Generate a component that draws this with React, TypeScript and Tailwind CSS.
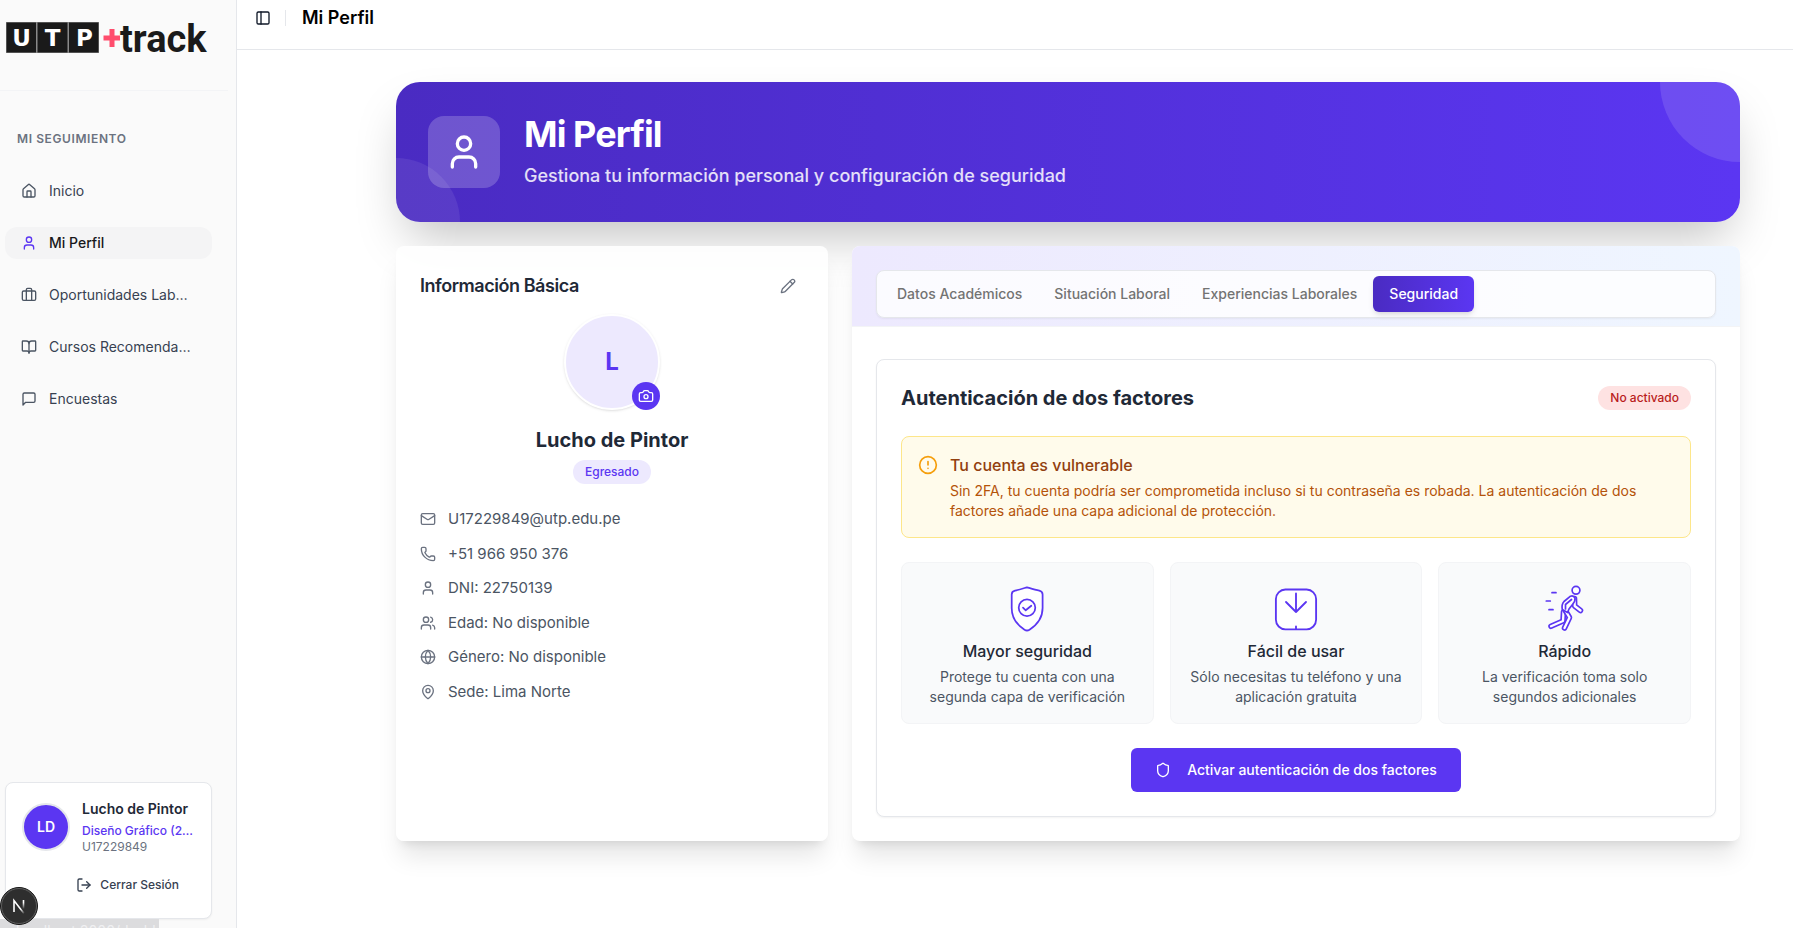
import type { ReactNode } from "react";
import {
  BookOpen,
  Briefcase,
  Camera,
  CircleAlert,
  Globe,
  House,
  LogOut,
  Mail,
  MapPin,
  PanelLeft,
  Pencil,
  Phone,
  Shield,
  User,
  Users,
} from "lucide-react";

function Logo() {
  return (
    <svg viewBox="0 0 208 40" className="h-10 w-[208px] overflow-visible" role="img" aria-label="UTP+track">
      <rect x="1" y="1" width="93" height="31" fill="#8a8a8a" />
      <rect x="1.5" y="1.5" width="29.5" height="30" fill="#1a1a1a" />
      <rect x="32.5" y="1.5" width="30" height="30" fill="#1a1a1a" />
      <rect x="64" y="1.5" width="29.5" height="30" fill="#1a1a1a" />
      <g fill="#fff" fontFamily="'DejaVu Sans', sans-serif" fontWeight="700" fontSize="23" textAnchor="middle">
        <text x="16.5" y="25">U</text>
        <text x="47.5" y="25">T</text>
        <text x="79.500" y="25">P</text>
      </g>
      <path d="M107 8v18M98.500 17h16.500" stroke="#ff4d6d" strokeWidth="5" fill="none" />
      <text x="115" y="31" fontFamily="Roboto, sans-serif" fontWeight="700" fontSize="38" fill="#1a1a1a">
        track
      </text>
    </svg>
  );
}

function MessageIcon() {
  return (
    <svg viewBox="0 0 24 24" className="size-4 shrink-0" fill="none" stroke="currentColor" strokeWidth="2" strokeLinecap="round" strokeLinejoin="round">
      <path d="M21 15a2 2 0 0 1-2 2H7l-4 4V5a2 2 0 0 1 2-2h14a2 2 0 0 1 2 2z" />
    </svg>
  );
}

function ShieldArt() {
  return (
    <svg viewBox="0 0 60 60" className="size-[60px]" fill="#fff" stroke="#5b36f2" strokeWidth="1.750" strokeLinecap="round" strokeLinejoin="round">
      <path d="M30 8.300C26 9.500 22 10.800 18 11.700C15.800 12.200 14.700 13.500 14.700 15.500V29C14.700 39 21 46.500 27.500 50.700Q30 52.300 32.500 50.700C39 46.500 45.600 39 45.600 29V15.500C45.600 13.500 44.300 12.200 42.300 11.700C38 10.800 34 9.500 30 8.300Z" />
      <circle cx="30" cy="28.700" r="8.300" />
      <path d="M26 28.700l2.700 2.600 5.600-4.600" fill="none" />
    </svg>
  );
}

function DownloadArt() {
  return (
    <svg viewBox="0 0 60 60" className="size-[60px]" fill="none" stroke="#5b36f2" strokeWidth="1.850" strokeLinecap="round" strokeLinejoin="round">
      <rect x="9.900" y="10.500" width="40.200" height="39.800" rx="9.500" fill="#fff" />
      <path d="M30 14.500V33M20 23l10 10 10-10M30 47.500V50" />
    </svg>
  );
}

const limbs = [
  "M28.500 33L28 42L16 47.300",
  "M39.500 19.500L39.700 27L45.500 31.500",
  "M30 31L34.500 38.500L29.500 49",
];

function RunnerArt() {
  return (
    <svg viewBox="0 0 60 60" className="size-[60px]" fill="none" stroke="#5b36f2" strokeWidth="1.700" strokeLinecap="round" strokeLinejoin="round">
      <circle cx="41" cy="11.300" r="3.900" fill="#fff" />
      <path d="M17 13.700h4M11.300 22h4M14 30.700h4" />
      {limbs.map((d) => (
        <g key={d}>
          <path d={d} strokeWidth="5.600" />
          <path d={d} strokeWidth="2.300" stroke="#fff" />
        </g>
      ))}
      <path d="M35.500 17.200Q38.500 16 40 19Q40.600 22 37.500 25.500L34 30L32.500 33.500L27.300 30.500Q26.300 25.500 29 22.500Z" fill="#fff" />
      <path d="M36.500 20.500L30.500 25.500V30" />
    </svg>
  );
}

const menu: { label: string; icon: ReactNode; active?: boolean }[] = [
  { label: "Inicio", icon: <House className="size-4 shrink-0" /> },
  { label: "Mi Perfil", icon: <User className="size-4 shrink-0" />, active: true },
  { label: "Oportunidades Laborales", icon: <Briefcase className="size-4 shrink-0" /> },
  { label: "Cursos Recomendados", icon: <BookOpen className="size-4 shrink-0" /> },
  { label: "Encuestas", icon: <MessageIcon /> },
];

function Sidebar() {
  return (
    <aside className="sticky top-0 flex h-screen w-[237px] shrink-0 flex-col border-r border-gray-200 bg-[#fafafa]">
      <div className="mr-2 h-[91px] border-b border-gray-100 pt-[21px] pl-[5px]">
        <Logo />
      </div>
      <h2 className="mt-10 pl-[17px] text-xs leading-4 font-semibold tracking-wider text-[#6b7280]">MI SEGUIMIENTO</h2>
      <nav className="mt-7 flex flex-col gap-5 pr-6 pl-[5px]">
        {menu.map((m) => (
          <a
            key={m.label}
            href="#"
            className={
              m.active
                ? "flex h-8 items-center gap-3 rounded-xl bg-[#f4f4f5] px-4 text-sm font-medium text-[#18181b]"
                : "flex h-8 items-center gap-3 rounded-xl px-4 text-sm text-[#374151]"
            }
          >
            <span className={m.active ? "text-[#5b36f2]" : "text-[#4b5563]"}>{m.icon}</span>
            <span className="truncate">{m.label}</span>
          </a>
        ))}
      </nav>
      <div className="mt-auto mr-6 mb-[9px] ml-[5px] rounded-lg border border-gray-200 bg-white px-4 pt-4 pb-[17px] shadow-xs">
        <div className="flex items-center gap-3">
          <div className="flex size-12 shrink-0 items-center justify-center rounded-full border-2 border-gray-200 bg-[#5b36f2] text-sm font-semibold text-white">
            LD
          </div>
          <div className="min-w-0">
            <p className="mb-1 truncate text-sm font-semibold text-[#1f2937]">Lucho de Pintor</p>
            <p className="truncate text-xs font-medium text-[#5b36f2]">Diseño Gráfico (2025)</p>
            <p className="text-xs text-[#6b7280]">U17229849</p>
          </div>
        </div>
        <button type="button" className="mt-3.5 ml-auto flex h-8 items-center gap-2 px-4 text-xs font-medium text-[#374151]">
          <LogOut className="size-4" />
          Cerrar Sesión
        </button>
      </div>
    </aside>
  );
}

const details = [
  { icon: Mail, text: "U17229849@utp.edu.pe" },
  { icon: Phone, text: "+51 966 950 376" },
  { icon: User, text: "DNI: 22750139" },
  { icon: Users, text: "Edad: No disponible" },
  { icon: Globe, text: "Género: No disponible" },
  { icon: MapPin, text: "Sede: Lima Norte" },
];

function BasicInfo() {
  return (
    <section className="rounded-lg bg-white/90 p-6 shadow-xl">
      <div className="flex h-8 items-center justify-between">
        <h2 className="text-lg font-semibold tracking-tight text-[#1f2937]">Información Básica</h2>
        <button type="button" aria-label="Editar" className="flex size-8 items-center justify-center text-[#6b7280]">
          <Pencil className="size-4" strokeWidth={2} />
        </button>
      </div>
      <div className="mt-3 flex flex-col items-center">
        <div className="relative">
          <div className="flex size-24 items-center justify-center rounded-full border-2 border-white bg-[#ede9fe] text-2xl font-bold text-[#5b36f2] shadow-sm">
            L
          </div>
          <button
            type="button"
            aria-label="Cambiar foto"
            className="absolute right-0 bottom-0 flex size-7 items-center justify-center rounded-full bg-[#5b36f2] text-white"
          >
            <Camera className="size-4" strokeWidth={2} />
          </button>
        </div>
        <h3 className="mt-4 text-xl font-bold text-[#1f2937]">Lucho de Pintor</h3>
        <span className="mt-1.5 rounded-full bg-[#ede9fe] px-3 py-1 text-xs font-medium text-[#5b36f2]">Egresado</span>
      </div>
      <ul className="mt-6 flex flex-col gap-3">
        {details.map(({ icon: Icon, text }) => (
          <li key={text} className="flex items-center gap-3 text-[15px] leading-normal text-[#4b5563]">
            <Icon className="size-4 text-[#6b7280]" strokeWidth={2} />
            {text}
          </li>
        ))}
      </ul>
    </section>
  );
}

const features = [
  { art: <ShieldArt />, title: "Mayor seguridad", text: "Protege tu cuenta con una segunda capa de verificación" },
  { art: <DownloadArt />, title: "Fácil de usar", text: "Sólo necesitas tu teléfono y una aplicación gratuita" },
  { art: <RunnerArt />, title: "Rápido", text: "La verificación toma solo segundos adicionales" },
];

function SecurityPanel() {
  return (
    <section className="col-span-2 overflow-hidden rounded-lg bg-white shadow-xl">
      <div className="border-b border-gray-100 bg-linear-to-r from-[#ede9fe] to-[#eff6ff] px-6 pt-6 pb-2">
        <div role="tablist" className="flex h-12 items-center rounded-lg border border-gray-200 bg-white/80 px-1 text-sm font-medium text-[#737373] shadow-xs">
          <button type="button" role="tab" aria-selected="false" className="h-9 px-4">Datos Académicos</button>
          <button type="button" role="tab" aria-selected="false" className="h-9 px-4">Situación Laboral</button>
          <button type="button" role="tab" aria-selected="false" className="h-9 px-4">Experiencias Laborales</button>
          <button
            type="button"
            role="tab"
            aria-selected="true"
            className="h-9 rounded-md bg-linear-to-r from-[#4a2bc2] to-[#5b36f2] px-4 font-medium text-white shadow-md"
          >
            Seguridad
          </button>
        </div>
      </div>
      <div className="px-6 pt-8 pb-6">
        <div className="rounded-lg border border-gray-200 bg-white p-6 shadow-xs">
          <div className="flex items-center justify-between">
            <h2 className="text-xl font-bold text-[#1f2937]">Autenticación de dos factores</h2>
            <span className="rounded-full bg-[#fee2e2] px-3 py-1 text-xs font-medium text-[#b91c1c]">No activado</span>
          </div>
          <div className="mt-6 flex gap-3 rounded-lg border border-[#fde68a] bg-[#fffbeb] p-4">
            <CircleAlert className="mt-0.5 size-5 shrink-0 text-[#f59e0b]" />
            <div>
              <h3 className="text-base font-medium text-[#92400e]">Tu cuenta es vulnerable</h3>
              <p className="mt-1 text-sm text-[#b45309]">
                Sin 2FA, tu cuenta podría ser comprometida incluso si tu contraseña es robada. La autenticación de dos
                factores añade una capa adicional de protección.
              </p>
            </div>
          </div>
          <div className="mt-6 grid grid-cols-3 gap-4">
            {features.map((f) => (
              <div key={f.title} className="flex flex-col items-center rounded-lg border border-gray-100 bg-[#f9fafb] p-4 text-center">
                {f.art}
                <h3 className="text-base font-medium text-[#1f2937]">{f.title}</h3>
                <p className="mt-1 text-sm text-[#4b5563]">{f.text}</p>
              </div>
            ))}
          </div>
          <div className="mt-6 flex justify-center">
            <button type="button" className="flex h-11 items-center gap-4 rounded-md bg-[#5b36f2] px-6 text-sm font-medium text-white">
              <Shield className="size-4" />
              Activar autenticación de dos factores
            </button>
          </div>
        </div>
      </div>
    </section>
  );
}

export default function App() {
  return (
    <div className="flex min-h-screen bg-white font-[Inter,sans-serif] text-gray-900">
      <Sidebar />
      <main className="min-w-0 flex-1">
        <header className="flex h-[50px] items-start border-b border-gray-200 pt-1 pl-[18px]">
          <div className="flex h-7 items-center">
            <button type="button" aria-label="Alternar menú" className="mr-2 flex h-7 w-4 items-center justify-center">
              <PanelLeft className="size-4" />
            </button>
            <span className="mr-4 ml-1.5 h-4 w-px bg-gray-200" />
            <h1 className="text-lg leading-7 font-semibold text-black">Mi Perfil</h1>
          </div>
        </header>
        <div className="mr-[53px] ml-auto flex max-w-[1344px] flex-col gap-6 pt-8 pb-12">
          <section className="relative rounded-3xl shadow-2xl">
            <div className="relative flex items-center gap-6 overflow-hidden rounded-3xl bg-linear-to-r from-[#4a2bc2] to-[#5b36f2] px-8 py-8 text-white">
              <div className="absolute -top-20 -right-20 size-40 rounded-full bg-white/12" />
              <div className="absolute -bottom-16 -left-16 size-32 rounded-full bg-white/8" />
              <div className="flex size-[72px] items-center justify-center rounded-2xl bg-white/20">
                <User className="size-10" />
              </div>
              <div>
                <h2 className="text-4xl font-bold tracking-tight">Mi Perfil</h2>
                <p className="mt-2 text-lg font-medium text-white/85">
                  Gestiona tu información personal y configuración de seguridad
                </p>
              </div>
            </div>
          </section>
          <div className="relative grid grid-cols-3 gap-6">
            <BasicInfo />
            <SecurityPanel />
          </div>
        </div>
      </main>
      <div className="fixed bottom-0 left-0 h-[9px] w-[159px] overflow-hidden bg-[#dcdcde] pt-1 pl-4 text-sm leading-4 text-[#f0f0f2]">
        localhost:3000/dashboard
      </div>
      <button type="button" aria-label="Herramientas" className="fixed bottom-[3px] left-0 size-[38px] rounded-full">
        <svg viewBox="0 0 38 38" className="size-[38px]" fill="none">
          <defs>
            <linearGradient id="diag" x1="15" y1="15" x2="24" y2="27" gradientUnits="userSpaceOnUse">
              <stop offset="0.600" stopColor="#fff" />
              <stop offset="1" stopColor="#fff" stopOpacity="0" />
            </linearGradient>
            <linearGradient id="stem" x1="23" y1="13" x2="23" y2="22" gradientUnits="userSpaceOnUse">
              <stop offset="0.300" stopColor="#fff" />
              <stop offset="1" stopColor="#fff" stopOpacity="0" />
            </linearGradient>
          </defs>
          <circle cx="19" cy="19" r="18.500" fill="#2e2e2e" stroke="#171717" />
          <circle cx="19" cy="19" r="17.500" stroke="#5c5c5c" />
          <path d="M14 25V13.500L24 26.500" stroke="url(#diag)" strokeWidth="1.600" />
          <path d="M23.500 13v11" stroke="url(#stem)" strokeWidth="1.600" />
        </svg>
      </button>
    </div>
  );
}
